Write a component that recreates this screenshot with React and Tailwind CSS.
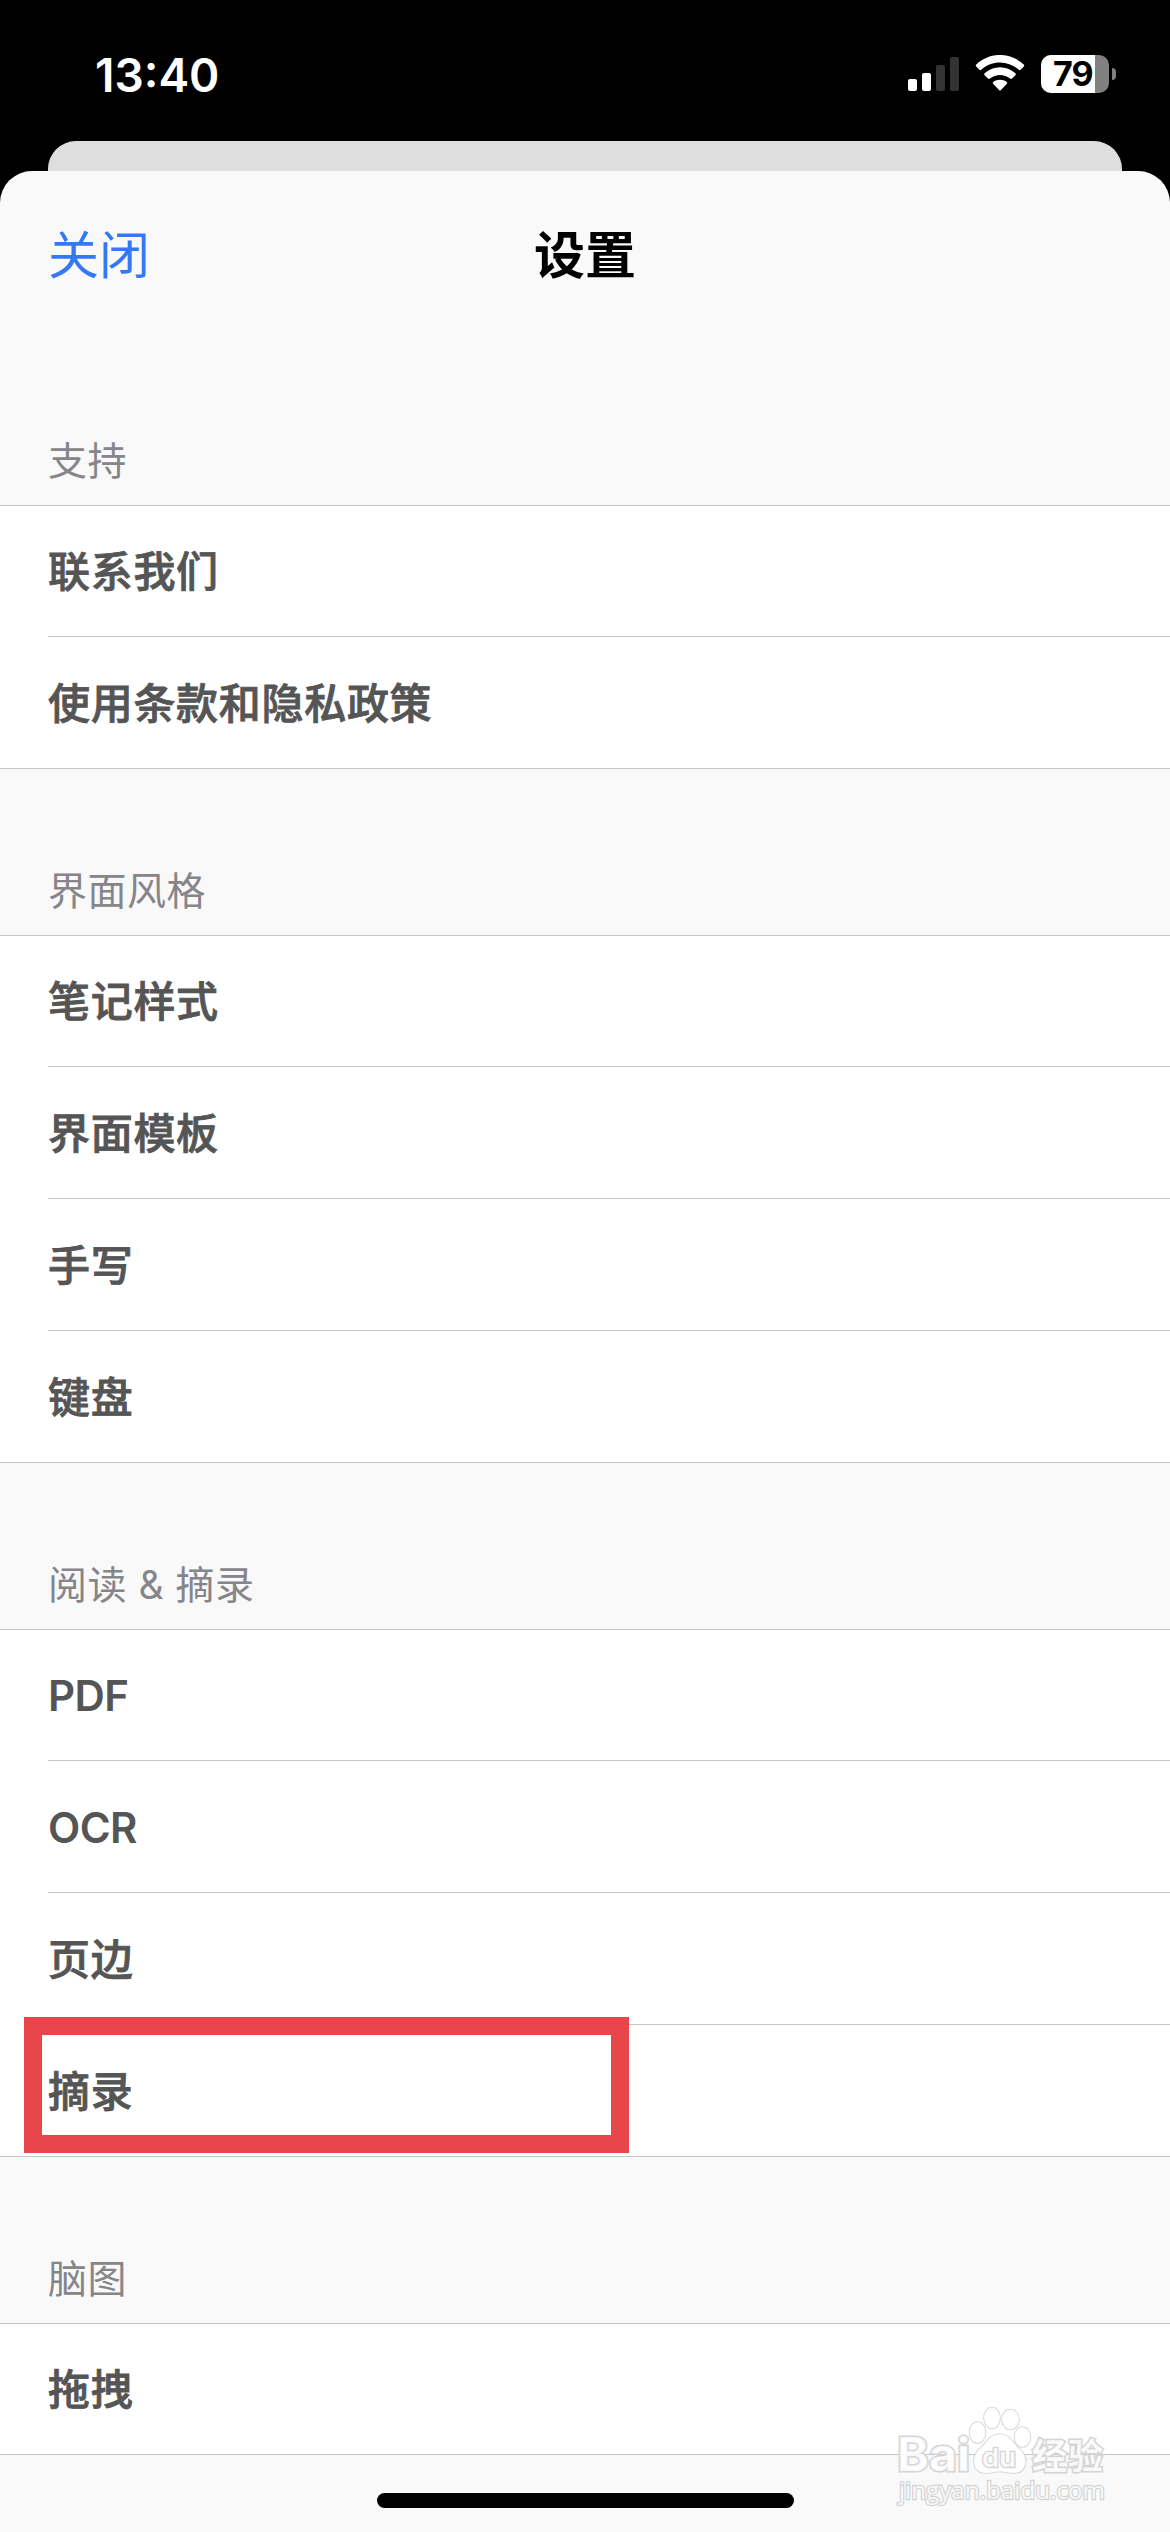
const sections = [
  { title: '支持', items: ['联系我们', '使用条款和隐私政策'] },
  { title: '界面风格', items: ['笔记样式', '界面模板', '手写', '键盘'] },
  { title: '阅读 & 摘录', items: ['PDF', 'OCR', '页边', '摘录'], marked: '摘录' },
  { title: '脑图', items: ['拖拽'] },
];

const isLatin = (text) => /^[A-Z]+$/.test(text);

const StatusBar = () => (
  <div className="flex h-[141px] items-start justify-between bg-black pl-[95px] pr-[54px] pt-[55px] text-white">
    <span className="-mt-[8px] text-[46px] leading-[56px] font-semibold">13:40</span>
    <div className="flex h-[38px]">
      <svg className="mt-[2px] h-[34px] w-[51px]" viewBox="0 0 51 34">
        <rect x="0" y="22" width="9" height="12" rx="2" fill="#fff" />
        <rect x="14" y="16" width="9" height="18" rx="2" fill="#fff" />
        <rect x="28" y="8" width="9" height="26" rx="2" fill="#333" />
        <rect x="42" y="0" width="9" height="34" rx="2" fill="#333" />
      </svg>
      <svg className="ml-[16px] h-[38px] w-[50px]" viewBox="0 0 50 38">
        <g fill="#fff">
          <path d="M1.3 9.4C15-3.2 35-3.2 48.7 9.4Q49.8 10.5 48.8 11.5L45.6 14.8Q44.8 15.6 43.8 14.7C33 5 17 5 6.2 14.7Q5.2 15.6 4.4 14.8L1.2 11.5Q.2 10.5 1.3 9.4Z" />
          <path d="M9.6 18.2C18.5 10.2 31.5 10.2 40.4 18.2Q41.4 19.2 40.4 20.2L37 23.5Q36 24.4 35 23.5C29 18.7 21 18.7 15 23.5Q14 24.4 13 23.5L9.6 20.2Q8.6 19.2 9.6 18.2Z" />
          <path d="M18.2 27C22 23.9 28 23.9 31.8 27Q32.8 27.9 31.9 28.8L26 34.9Q25 35.9 24 34.9L18.1 28.8Q17.2 27.9 18.2 27Z" />
        </g>
      </svg>
      <div className="ml-[16px] flex items-center">
        <div className="flex h-[38px] w-[68px] items-center rounded-[10px] bg-[#808080]">
          <div className="flex h-full w-[54px] items-center rounded-l-[10px] bg-white pl-[12px] text-[34px] leading-[38px] font-bold tracking-[-1px] text-black">
            79
          </div>
        </div>
        <div className="ml-[3px] h-[12px] w-[4px] rounded-r-full bg-[#808080]" />
      </div>
    </div>
  </div>
);

const NavBar = () => (
  <div className="grid h-[171px] grid-cols-3 items-center px-[48px] pb-[2px] text-[51px] leading-[74px]">
    <button type="button" className="text-left text-[#3478f6]">
      关闭
    </button>
    <h1 className="text-center font-bold text-black">设置</h1>
  </div>
);

const Row = ({ label, first, last, marked }) => (
  <li className={`relative flex bg-white pl-[48px] ${first ? 'h-[131px]' : 'h-[132px]'} ${last ? 'border-b border-[#c6c6c8]' : ''}`}>
    <div
      className={`flex flex-1 items-center text-[42px] text-[#555] ${first ? '' : 'pt-[2px]'} ${last ? '' : 'border-b border-[#c6c6c8]'} ${isLatin(label) ? 'font-semibold tracking-[-0.6px]' : 'font-medium tracking-[0.7px] [-webkit-text-stroke:0.8px_#555]'}`}
    >
      {label}
    </div>
    {marked && (
      <div className="absolute top-[-8px] left-[24px] h-[136px] w-[605px] border-[18px] border-[#e8464b]" />
    )}
  </li>
);

const Section = ({ title, items, marked }) => (
  <section>
    <h2 className="flex h-[167px] items-end border-b border-[#c6c6c8] px-[48px] pb-[16px] text-[39px] leading-[56px] tracking-[0.5px] text-[#85858a]">
      {title}
    </h2>
    <ul>
      {items.map((item, i) => (
        <Row
          key={item}
          label={item}
          first={i === 0}
          last={i === items.length - 1}
          marked={item === marked}
        />
      ))}
    </ul>
  </section>
);

const Watermark = () => (
  <svg
    className="absolute right-[59px] bottom-[19px] h-[120px] w-[220px]"
    viewBox="0 0 220 120"
    fill="#fff"
    fillOpacity="0.85"
    stroke="#d4d4d4"
    strokeWidth="1.6"
    paintOrder="stroke"
  >
    <text x="6" y="78" fontSize="46" fontWeight="700" textLength="73" lengthAdjust="spacingAndGlyphs" strokeWidth="3">Bai</text>
    <ellipse cx="86.5" cy="39.5" rx="8" ry="10.5" />
    <ellipse cx="101" cy="25" rx="8" ry="10.5" />
    <ellipse cx="119.5" cy="26.5" rx="8.5" ry="10" />
    <ellipse cx="131.5" cy="44" rx="8" ry="10" />
    <path d="M108.5 41C119 41 122 50.5 129 56.5C138 64.5 136 79.5 124 80C117 80.5 114 78.5 108.5 78.5C103 78.5 100 80.5 94 80C81 79.5 80 64.5 88 56.5C95 50.5 99 41 108.5 41Z" />
    <text x="91" y="74" fontSize="26" fontWeight="600" textLength="34" lengthAdjust="spacingAndGlyphs" strokeWidth="2.4">du</text>
    <text x="141" y="76" fontSize="35" fontWeight="700" textLength="71" strokeWidth="3">经验</text>
    <text x="8" y="106" fontSize="24" textLength="206" lengthAdjust="spacingAndGlyphs" strokeWidth="2.4" className="font-['Open_Sans']">jingyan.baidu.com</text>
  </svg>
);

export default function App() {
  return (
    <div className="relative h-[2532px] w-[1170px] overflow-hidden bg-black font-['Inter','Noto_Sans_CJK_SC',sans-serif]">
      <StatusBar />
      <div className="mx-[48px] h-[60px] rounded-t-[28px] bg-[#dedede]" />
      <main className="relative -mt-[30px] h-[2361px] rounded-t-[32px] bg-[#f9f9f9]">
        <NavBar />
        <div className="-mt-[3px]">
          {sections.map((section) => (
            <Section key={section.title} {...section} />
          ))}
        </div>
      </main>
      <Watermark />
      <div className="absolute bottom-[24px] left-[377px] h-[15px] w-[417px] rounded-full bg-black" />
    </div>
  );
}
